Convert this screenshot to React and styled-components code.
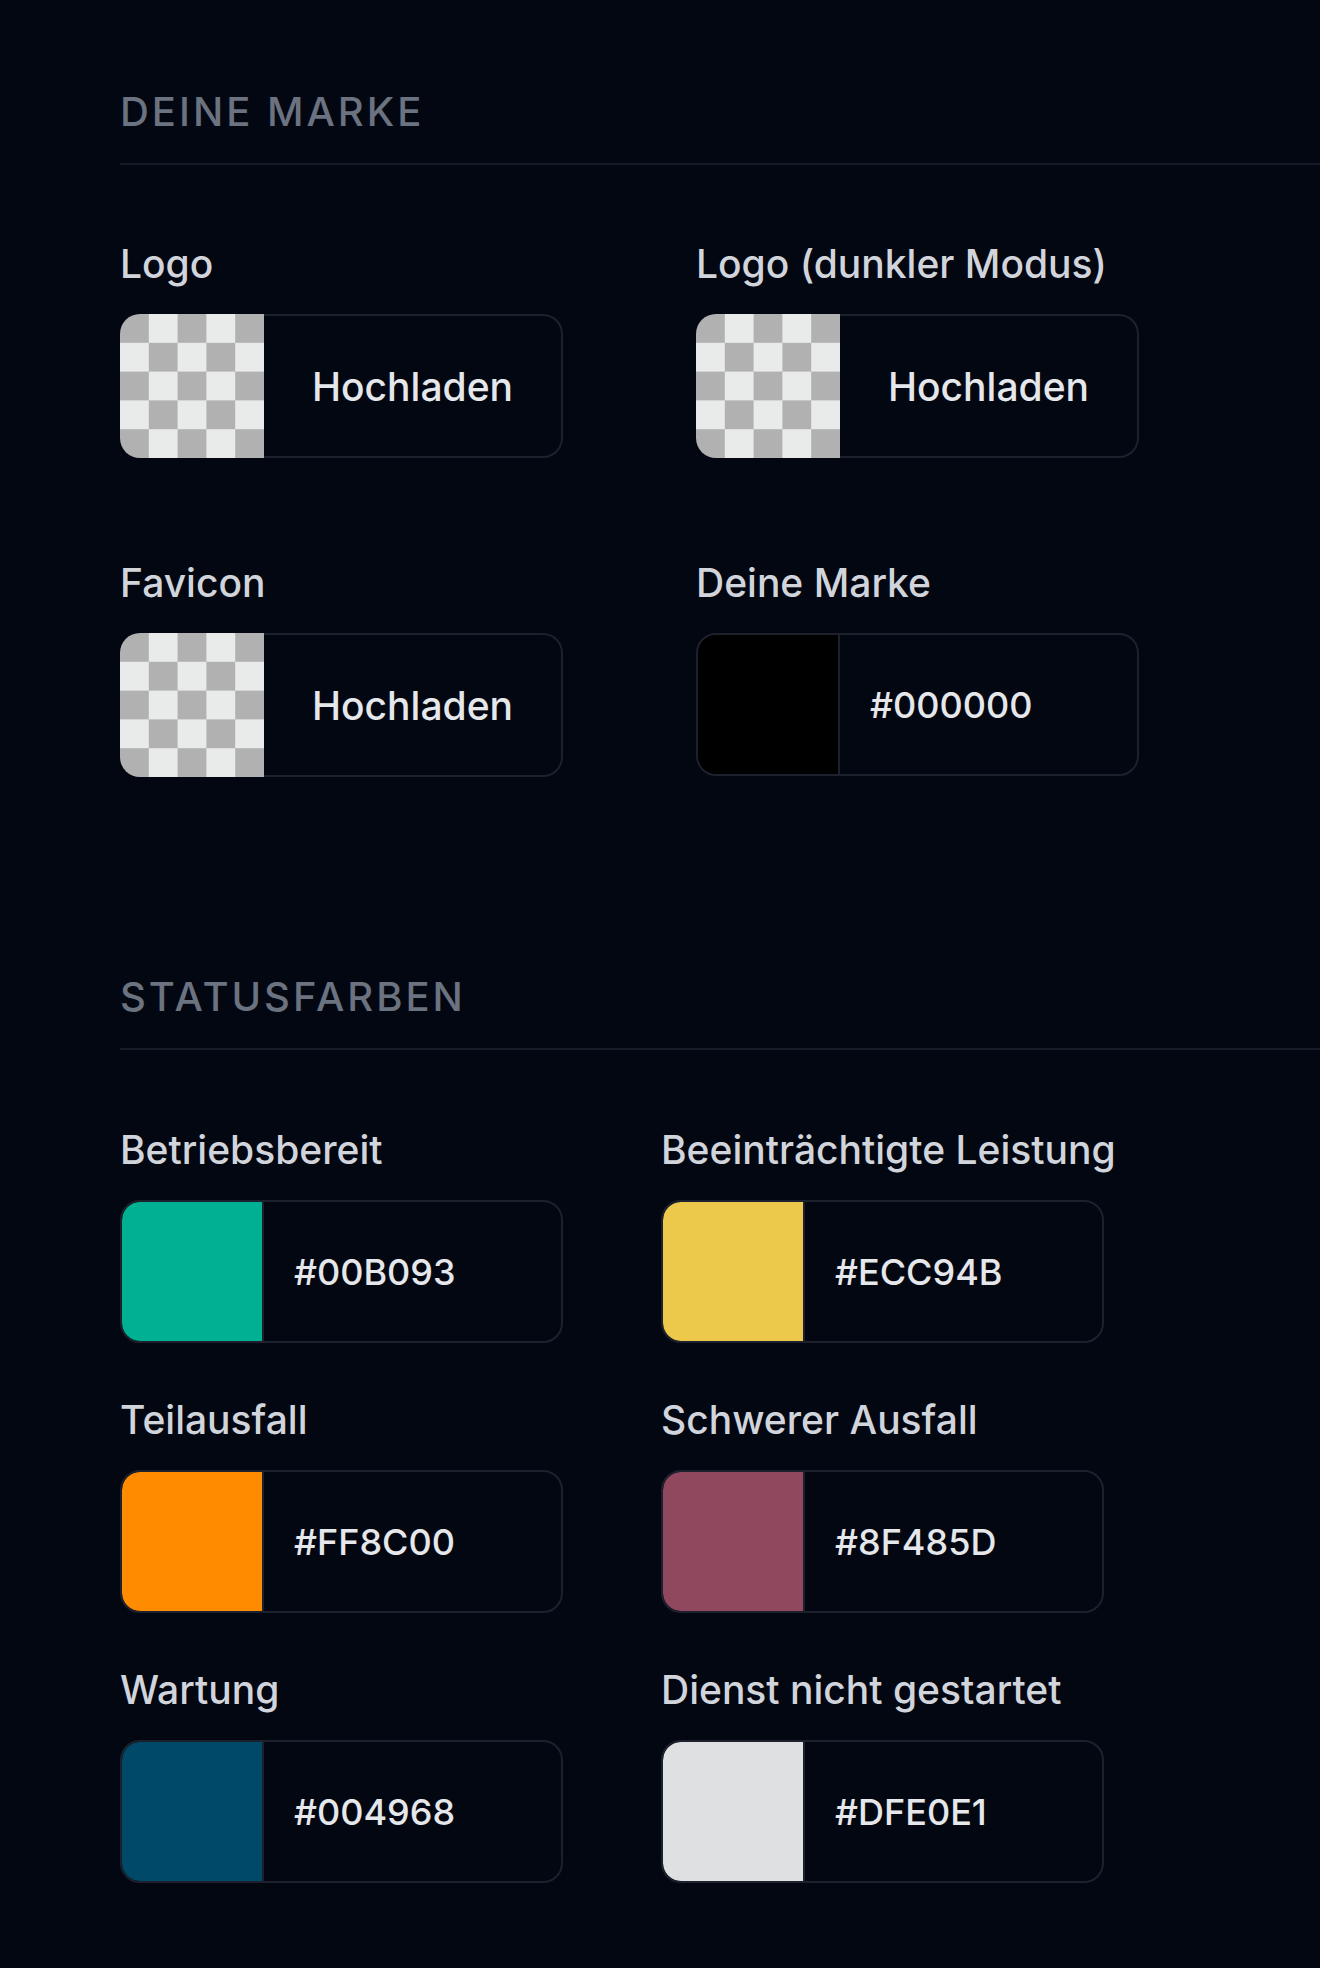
import styled, { createGlobalStyle } from "styled-components";

const GlobalStyle = createGlobalStyle`
  body {
    margin: 0;
    background: #030712;
    font-family: Inter, "Noto Sans", sans-serif;
  }
`;

const brandFields = [
  { label: "Logo", type: "upload" },
  { label: "Logo (dunkler Modus)", type: "upload" },
  { label: "Favicon", type: "upload" },
  { label: "Deine Marke", type: "color", value: "#000000" },
];

const statusFields = [
  { label: "Betriebsbereit", value: "#00B093" },
  { label: "Beeinträchtigte Leistung", value: "#ECC94B" },
  { label: "Teilausfall", value: "#FF8C00" },
  { label: "Schwerer Ausfall", value: "#8F485D" },
  { label: "Wartung", value: "#004968" },
  { label: "Dienst nicht gestartet", value: "#DFE0E1" },
];

export default function App() {
  return (
    <Page>
      <GlobalStyle />
      <Section>
        <SectionTitle>Deine Marke</SectionTitle>
        <Grid $col={576} $rowGap={101}>
          {brandFields.map((f) => (
            <Field key={f.label}>
              <Label>{f.label}</Label>
              {f.type === "upload" ? (
                <Upload>
                  <Checker />
                  <UploadButton>Hochladen</UploadButton>
                </Upload>
              ) : (
                <ColorBox>
                  <Swatch style={{ background: f.value }} />
                  <HexValue>{f.value}</HexValue>
                </ColorBox>
              )}
            </Field>
          ))}
        </Grid>
      </Section>

      <Section $top={196}>
        <SectionTitle>Statusfarben</SectionTitle>
        <Grid $col={541} $rowGap={53} $top={76}>
          {statusFields.map((f) => (
            <Field key={f.label}>
              <Label>{f.label}</Label>
              <ColorBox>
                <Swatch style={{ background: f.value }} />
                <HexValue>{f.value}</HexValue>
              </ColorBox>
            </Field>
          ))}
        </Grid>
      </Section>
    </Page>
  );
}

const Page = styled.div`
  padding: 88px 0 80px 120px;
`;

const Section = styled.section`
  margin-top: ${(p) => p.$top || 0}px;
`;

const SectionTitle = styled.h2`
  margin: 0;
  padding-bottom: 27px;
  border-bottom: 2px solid #161b27;
  font-size: 40px;
  line-height: 48px;
  font-weight: 500;
  letter-spacing: 3px;
  text-transform: uppercase;
  color: #6b7280;
`;

const Grid = styled.div`
  display: grid;
  grid-template-columns: ${(p) => p.$col}px 443px;
  row-gap: ${(p) => p.$rowGap}px;
  margin-top: ${(p) => p.$top || 75}px;
`;

const Field = styled.div`
  display: flex;
  flex-direction: column;
  gap: 26px;
`;

const Label = styled.label`
  font-size: 39px;
  line-height: 48px;
  font-weight: 500;
  white-space: nowrap;
  color: #d1d5db;
`;

const Upload = styled.div`
  display: flex;
  width: 443px;
  height: 144px;
`;

const Checker = styled.div`
  width: 144px;
  flex-shrink: 0;
  border-radius: 20px 0 0 20px;
  background-color: #e9eaea;
  background-image: conic-gradient(
    #b1b1b1 0 25%,
    transparent 0 50%,
    #b1b1b1 0 75%,
    transparent 0
  );
  background-size: 57.6px 57.6px;
  background-position: 28.8px 0;
`;

const UploadButton = styled.button`
  flex: 1;
  border: 2px solid #1c212d;
  border-left: none;
  border-radius: 0 20px 20px 0;
  background: transparent;
  font-family: inherit;
  font-size: 39px;
  font-weight: 500;
  color: #e5e7eb;
  cursor: pointer;
`;

const ColorBox = styled.div`
  display: flex;
  align-items: center;
  width: 443px;
  height: 143px;
  box-sizing: border-box;
  border: 2px solid #1c212d;
  border-radius: 20px;
  overflow: hidden;
`;

const Swatch = styled.div`
  width: 140px;
  height: 100%;
  flex-shrink: 0;
  border-right: 2px solid #1c212d;
  border-radius: 18px 0 0 18px;
`;

const HexValue = styled.span`
  padding-left: 30px;
  font-size: 36px;
  font-weight: 500;
  color: #e5e7eb;
`;
